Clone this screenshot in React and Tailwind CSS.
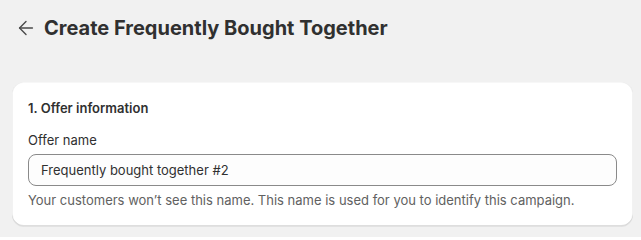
import { ArrowLeft } from "lucide-react";

const OfferInformation = () => {
  return (
    <div className="ml-3 mr-2 rounded-xl bg-white p-4 shadow-[0_1px_0_0_rgba(26,26,26,0.07),inset_0_-1px_0_0_rgba(0,0,0,0.13),inset_1px_0_0_0_rgba(0,0,0,0.05),inset_-1px_0_0_0_rgba(0,0,0,0.05),inset_0_1px_0_0_rgba(0,0,0,0.03)]">
      <h2 className="text-[13px] font-semibold leading-5 text-[#303030]">
        1. Offer information
      </h2>
      <label className="mt-3 block text-[13px] leading-5 text-[#303030]">
        Offer name
      </label>
      <input
        type="text"
        defaultValue="Frequently bought together #2"
        className="mt-1 block h-8 w-full rounded-lg border border-[#8a8a8a] bg-[#fdfdfd] px-3 text-[13px] text-[#303030] outline-none"
      />
      <p className="mt-1 text-[13px] leading-5 text-[#616161]">
        Your customers won’t see this name. This name is used for you to
        identify this campaign.
      </p>
    </div>
  );
};

const App = () => {
  return (
    <div className="min-h-[237px] bg-[#f1f1f1] pt-[14px] font-['Inter',sans-serif] antialiased">
      <div className="flex h-7 items-center gap-[7px] pl-[15px]">
        <button className="flex items-center justify-center text-[#4a4a4a]">
          <ArrowLeft size={22} strokeWidth={1.5} />
        </button>
        <h1 className="text-xl font-bold leading-6 text-[#303030]">
          Create Frequently Bought Together
        </h1>
      </div>
      <div className="mt-[40px]">
        <OfferInformation />
      </div>
    </div>
  );
};

export default App;
